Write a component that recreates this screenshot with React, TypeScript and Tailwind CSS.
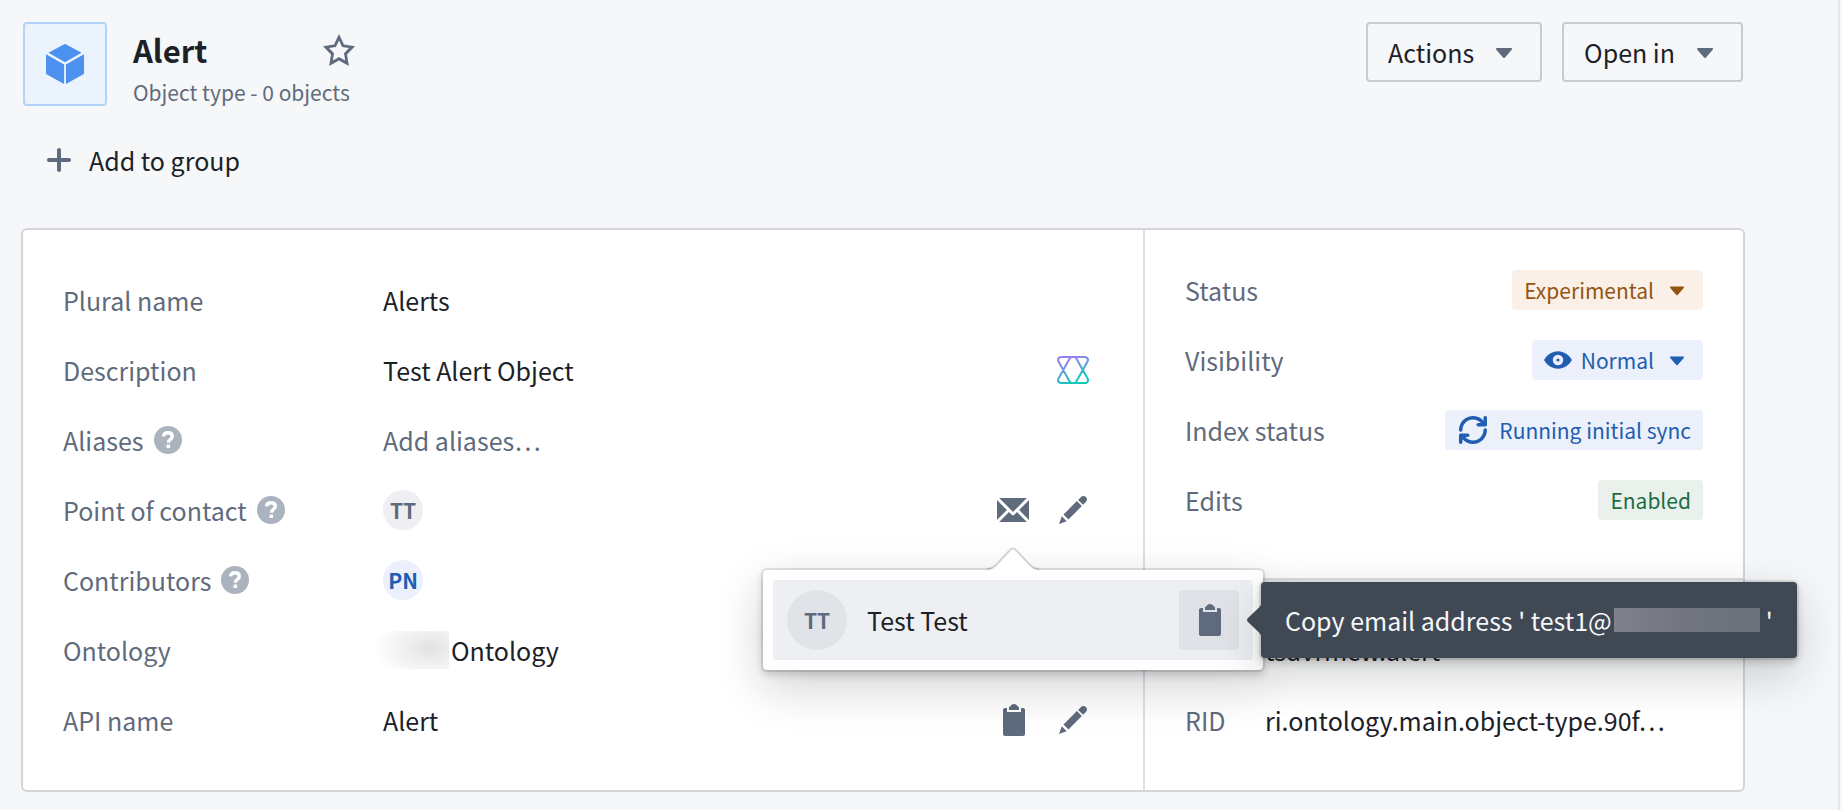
import {useState} from 'react';
import type {ReactNode} from 'react';

// Ícones em grade 16x16
const ICONS = {
    caret: 'M12 6.5c0-.28-.22-.5-.5-.5h-7a.495.495 0 00-.37.83l3.5 4c.09.1.22.17.37.17s.28-.07.37-.17l3.5-4c.08-.09.13-.2.13-.33z',
    star: 'M16 6.11l-5.53-.84L8 0 5.53 5.27 0 6.11l4 4.1L3.06 16 8 13.27 12.94 16 12 10.21l4-4.1zM4.91 13.2l.59-3.62L3 7.02l3.45-.53L8 3.2l1.55 3.29 3.45.53-2.5 2.56.59 3.62L8 11.49 4.91 13.2z',
    plus: 'M13 7H9V3c0-.55-.45-1-1-1s-1 .45-1 1v4H3c-.55 0-1 .45-1 1s.45 1 1 1h4v4c0 .55.45 1 1 1s1-.45 1-1V9h4c.55 0 1-.45 1-1s-.45-1-1-1z',
    envelope: 'M0 3.06v9.88L4.94 8 0 3.06zM14.94 2H1.06L8 8.94 14.94 2zm-6.41 8.53c-.14.14-.32.22-.53.22s-.39-.08-.53-.22L6 9.06 1.06 14h13.88L10 9.06l-1.47 1.47zM11.06 8L16 12.94V3.06L11.06 8z',
    edit: 'M3.25 10.26l2.47 2.47 6.69-6.69-2.46-2.48-6.7 6.7zM.99 14.99l3.86-1.39-2.46-2.44L.99 14.99zm12.25-14c-.48 0-.92.2-1.24.51l-1.44 1.44 2.47 2.47 1.44-1.44c.32-.32.51-.75.51-1.24.01-.95-.77-1.74-1.74-1.74z',
    clipboard: 'M11 2c0-.55-.45-1-1-1h.22C9.88.4 9.24 0 8.5 0S7.12.4 6.78 1H7c-.55 0-1 .45-1 1v1h5V2zm2 0h-1v2H5V2H4c-.55 0-1 .45-1 1v12c0 .55.45 1 1 1h9c.55 0 1-.45 1-1V3c0-.55-.45-1-1-1z',
    refresh: 'M14.99 6.99c-.55 0-1 .45-1 1 0 3.31-2.69 6-6 6-1.77 0-3.36-.78-4.46-2h1.46c.55 0 1-.45 1-1s-.45-1-1-1h-4c-.55 0-1 .45-1 1v4c0 .55.45 1 1 1s1-.45 1-1v-1.74a7.95 7.95 0 006 2.74c4.42 0 8-3.58 8-8 0-.55-.45-1-1-1zm0-7c-.55 0-1 .45-1 1v1.74a7.95 7.95 0 00-6-2.74c-4.42 0-8 3.58-8 8 0 .55.45 1 1 1s1-.45 1-1c0-3.31 2.69-6 6-6 1.77 0 3.36.78 4.46 2h-1.46c-.55 0-1 .45-1 1s.45 1 1 1h4c.55 0 1-.45 1-1v-4c0-.56-.45-1-1-1z',
    eye: 'M8 3C4.6 3 1.6 5.1 0 8c1.6 2.9 4.6 5 8 5s6.4-2.1 8-5c-1.6-2.9-4.6-5-8-5zm0 2a3 3 0 110 6 3 3 0 010-6zm0 2.1a.9.9 0 100 1.8.9.9 0 000-1.8z',
};

function Icon({name, className}: {name: keyof typeof ICONS; className: string}) {
    return (
        <svg viewBox="0 0 16 16" className={`shrink-0 ${className}`} fill="currentColor" fillRule="evenodd" aria-hidden="true">
            <path d={ICONS[name]}/>
        </svg>
    );
}

function HelpIcon() {
    return (
        <svg viewBox="0 0 28 28" className="size-7 shrink-0" aria-hidden="true">
            <circle cx="14" cy="14" r="14" fill="#abb3bf"/>
            <path d="M9.5 10.4c.3-2.5 2.1-3.7 4.5-3.7 2.5 0 4.3 1.3 4.3 3.5 0 3.1-3.8 3.2-4 6.4" fill="none" stroke="#fff" strokeWidth="3.4"/>
            <rect x="12.5" y="18.5" width="3.6" height="3.5" rx=".6" fill="#fff"/>
        </svg>
    );
}

function CubeIcon() {
    return (
        <svg viewBox="0 0 40 42" className="h-[42px] w-10" fill="#4c90f0" aria-hidden="true">
            <path d="M20 1q.7 0 1.3.4L36.5 9.8 20 19.3 3.5 9.8 18.7 1.4Q19.3 1 20 1zM1 11.2l18.1 10.4V41L2 31.6q-1-.6-1-1.6zM39 11.2 20.9 21.6V41L38 31.6q1-.6 1-1.6z"/>
        </svg>
    );
}

function AssistIcon() {
    return (
        <svg viewBox="0 0 32 28" className="h-7 w-8" fill="none" strokeWidth="2" strokeLinejoin="round" aria-hidden="true">
            <defs>
                <linearGradient id="assist" x1="8" y1="0" x2="20" y2="28" gradientUnits="userSpaceOnUse">
                    <stop offset=".15" stopColor="#9881f3"/>
                    <stop offset=".9" stopColor="#13c9ba"/>
                </linearGradient>
            </defs>
            <g stroke="url(#assist)">
                <path d="M4 1h24q3 .5 3 3-.2 1-.8 2L19.5 25.3Q18.5 27 17 27h12q2.5-1 2-3.5-.3-1-1-2L19.5 2.7Q18.5 1 16.5 1"/>
                <path d="M28 27H4q-3-.5-3-3 .2-1 .8-2L12.5 2.7Q13.5 1 15.5 1M4 1Q1 1.5 1 4q.2 1 .8 2l10.7 19.3Q13.5 27 15.5 27"/>
            </g>
        </svg>
    );
}

function Avatar({initials, className}: {initials: string; className: string}) {
    return (
        <span className={`flex shrink-0 items-center justify-center rounded-full text-[21px] font-semibold ${className}`}>
            {initials}
        </span>
    );
}

function Field({label, help, actions, children}: {label: string; help?: boolean; actions?: ReactNode; children: ReactNode}) {
    return (
        <div className="flex h-[70px] items-center">
            <dt className="flex w-80 shrink-0 items-center gap-2.5 text-[#5f6b7c]">
                {label}
                {help && <HelpIcon/>}
            </dt>
            <dd className="flex flex-1 items-center">{children}</dd>
            {actions && <div className="flex items-center gap-7 text-[#5f6b7c]">{actions}</div>}
        </div>
    );
}

function StatusRow({label, children}: {label: string; children: ReactNode}) {
    return (
        <div className="flex h-[70px] items-center justify-between">
            <dt className="text-[#5f6b7c]">{label}</dt>
            <dd>{children}</dd>
        </div>
    );
}

function CopyTooltip() {
    return (
        <div
            role="tooltip"
            className="absolute top-1/2 left-full ml-[22px] flex h-19 -translate-y-1/2 items-center rounded-sm bg-[#404854] px-6 whitespace-nowrap text-[#f6f7f9] shadow-[0_0_0_2px_rgba(17,20,24,0.1),0_4px_8px_rgba(17,20,24,0.2),0_16px_48px_rgba(17,20,24,0.2)]"
        >
            <svg viewBox="0 0 16 36" className="absolute right-full h-9 w-4 translate-x-px" fill="#404854" aria-hidden="true">
                <path d="M16 0q-.5 3-3 5.5L2 16q-2 2 0 4l11 10.5q2.500 2.500 3 5.500z"/>
            </svg>
            <span>Copy email address ' test1@</span>
            <span className="ml-0.5 h-6 w-[146px] bg-linear-to-r from-[#7f828a] via-[#71757e] to-[#6c7079]"/>
            <span className="pl-1.5">'</span>
        </div>
    );
}

function ContactPopover() {
    return (
        <div
            className="absolute top-full left-1/2 z-10 mt-11 w-[500px] -translate-x-1/2 rounded-sm bg-white p-2.5 text-[#1c2127] shadow-[0_0_0_2px_rgba(17,20,24,0.1),0_4px_8px_rgba(17,20,24,0.2),0_16px_48px_rgba(17,20,24,0.2)]"
        >
            <svg viewBox="0 0 52 24" className="absolute bottom-full left-1/2 h-6 w-[52px] -translate-x-1/2 translate-y-px" aria-hidden="true">
                <path d="M0 23q6-.5 10-5L23 4q3-3 6 0l13 14q4 4.5 10 5v1H0z" fill="#fff"/>
                <path d="M0 22q6-.5 10-5L23 3q3-3 6 0l13 14q4 4.5 10 5" fill="none" stroke="#111418" strokeOpacity=".16" strokeWidth="2"/>
            </svg>
            <div className="flex h-20 items-center rounded-sm bg-[#edeff2] px-3.5">
                <Avatar initials="TT" className="size-15 bg-[#e1e3e8] text-[#5f6b7c]"/>
                <span className="flex-1 pl-5">Test Test</span>
                <div className="relative">
                    <button aria-label="Copy email address" className="flex size-15 items-center justify-center rounded-sm bg-[#e0e2e7] text-[#5f6b7c]">
                        <Icon name="clipboard" className="size-8"/>
                    </button>
                    <CopyTooltip/>
                </div>
            </div>
        </div>
    );
}

export default function App() {
    const [contactOpen, setContactOpen] = useState(true);

    return (
        <div className="min-h-screen bg-[#f6f7f9] pr-0.5 font-['Noto_Sans_CJK_SC',sans-serif] text-[25px] leading-9 text-[#1c2127]">
            <main className="min-h-screen border-r-2 border-[#e5e8eb] pt-[22px] pr-[93px] pb-[18px] pl-[21px]">
                <header className="flex items-start justify-between pr-0.5 pl-0.5">
                    <div className="flex items-start gap-[26px]">
                        <div className="flex size-21 items-center justify-center rounded-sm border-2 border-[#b5d3fa] bg-[#ebf3fd]">
                            <CubeIcon/>
                        </div>
                        <div className="min-w-[222px]">
                            <div className="flex h-14 items-center justify-between">
                                <h1 className="text-[31px] font-bold">Alert</h1>
                                <button aria-label="Favorite" className="text-[#5f6b7c]">
                                    <Icon name="star" className="size-8"/>
                                </button>
                            </div>
                            <p className="text-[21px] leading-7 text-[#5f6b7c]">Object type - 0 objects</p>
                        </div>
                    </div>
                    <div className="flex gap-5">
                        <button className="flex h-15 items-center gap-3.5 rounded-sm border-2 border-[#c9cbcf] px-5">
                            Actions
                            <Icon name="caret" className="size-8 text-[#5f6b7c]"/>
                        </button>
                        <button className="flex h-15 items-center gap-3.5 rounded-sm border-2 border-[#c9cbcf] px-5">
                            Open in
                            <Icon name="caret" className="size-8 text-[#5f6b7c]"/>
                        </button>
                    </div>
                </header>

                <button className="mt-6 ml-[22px] flex h-15 items-center gap-3.5">
                    <Icon name="plus" className="size-8 text-[#5f6b7c]"/>
                    Add to group
                </button>

                <section className="mt-[38px] flex rounded-md border-2 border-[#d3d5d9] bg-white">
                    <dl className="flex-1 py-[35px] pr-[54px] pl-10">
                        <Field label="Plural name">Alerts</Field>
                        <Field
                            label="Description"
                            actions={<button aria-label="Generate description"><AssistIcon/></button>}
                        >
                            Test Alert Object
                        </Field>
                        <Field label="Aliases" help>
                            <span className="text-[#5f6b7c]">Add aliases…</span>
                        </Field>
                        <Field
                            label="Point of contact"
                            help
                            actions={
                                <>
                                    <div className="relative flex">
                                        <button aria-label="Contact" onClick={() => setContactOpen(!contactOpen)}>
                                            <Icon name="envelope" className="size-8"/>
                                        </button>
                                        {contactOpen && <ContactPopover/>}
                                    </div>
                                    <button aria-label="Edit point of contact"><Icon name="edit" className="size-8"/></button>
                                </>
                            }
                        >
                            <Avatar initials="TT" className="size-10 bg-[#edeff2] text-[#5f6b7c]"/>
                        </Field>
                        <Field label="Contributors" help>
                            <Avatar initials="PN" className="size-10 bg-[#ebf0fc] text-[#215db0]"/>
                        </Field>
                        <Field label="Ontology">
                            <span className="-ml-2.5 mr-0.5 h-[38px] w-19 bg-[radial-gradient(57px_32px_at_75%_45%,#e2e2e2,#ffffff)]"/>
                            Ontology
                        </Field>
                        <Field
                            label="API name"
                            actions={
                                <>
                                    <button aria-label="Copy API name"><Icon name="clipboard" className="size-8"/></button>
                                    <button aria-label="Edit API name"><Icon name="edit" className="size-8"/></button>
                                </>
                            }
                        >
                            Alert
                        </Field>
                    </dl>

                    <div className="w-[600px] shrink-0 border-l-2 border-[#dce0e5]">
                        <dl className="border-b-2 border-[#dce0e5] px-10 pt-[25px] pb-[43px]">
                            <StatusRow label="Status">
                                <button className="flex h-10 items-center gap-[9px] rounded-sm bg-[#faf0e8] px-3 text-[21px] text-[#935610]">
                                    Experimental
                                    <Icon name="caret" className="size-7"/>
                                </button>
                            </StatusRow>
                            <StatusRow label="Visibility">
                                <button className="flex h-10 items-center gap-[9px] rounded-sm bg-[#ebf0fb] px-3 text-[21px] text-[#215db0]">
                                    <Icon name="eye" className="size-7"/>
                                    Normal
                                    <Icon name="caret" className="size-7"/>
                                </button>
                            </StatusRow>
                            <StatusRow label="Index status">
                                <span className="flex h-10 items-center gap-3 rounded-sm bg-[#ebf0fb] pr-3 pl-3.5 text-[21px] text-[#215db0]">
                                    <Icon name="refresh" className="size-7"/>
                                    Running initial sync
                                </span>
                            </StatusRow>
                            <StatusRow label="Edits">
                                <span className="flex h-10 items-center rounded-sm bg-[#eaf1ed] px-3 text-[21px] text-[#1c6e42]">
                                    Enabled
                                </span>
                            </StatusRow>
                        </dl>
                        <dl className="px-10 pt-[35px]">
                            <div className="flex h-[70px] items-center">
                                <dt className="w-20 text-[#5f6b7c]">API</dt>
                                <dd>tsdvrmcw.alert</dd>
                            </div>
                            <div className="flex h-[70px] items-center">
                                <dt className="w-20 text-[#5f6b7c]">RID</dt>
                                <dd>ri.ontology.main.object-type.90f…</dd>
                            </div>
                        </dl>
                    </div>
                </section>
            </main>
        </div>
    );
}
